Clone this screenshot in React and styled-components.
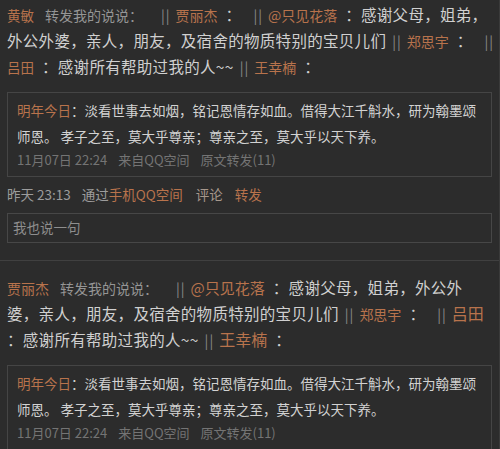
import styled, { createGlobalStyle } from "styled-components";

const GlobalStyle = createGlobalStyle`
  html, body {
    margin: 0;
    padding: 0;
    background: #2c2c2c;
  }
  body {
    font-family: "Noto Sans CJK SC", "Noto Sans", sans-serif;
    color: #cfcfcf;
  }
`;

const Page = styled.div`
  width: 499px;
  height: 449px;
  overflow: hidden;
  border-right: 1px solid #3a3a3a;
  background: #2c2c2c;
`;

const Post = styled.div`
  padding: 13px 7px 17px;
  border-bottom: 1px solid #404040;

  &:first-child {
    padding-top: 1px;
  }
`;

const Line = styled.div`
  height: 26px;
  line-height: 26px;
  white-space: nowrap;
  font-size: 15.5px;
  letter-spacing: 0.3px;
  color: #d0d0d0;
`;

const Name = styled.span`
  font-size: ${({ size }) => size || 14}px;
  letter-spacing: 0;
  color: #b8734c;
`;

const Muted = styled.span`
  font-size: 14px;
  letter-spacing: 0;
  margin: 0 12px 0 11px;
  color: #959595;
`;

const Sep = styled.span`
  color: #8a8a8a;
  font-size: 14px;
  letter-spacing: 1px;
  margin: 0 5px 0 6px;
`;

const Colon = styled.span`
  margin: 0 ${({ tight }) => (tight ? 0 : 6)}px 0 8px;
`;

const Quote = styled.div`
  margin-top: 13px;
  padding: 4px 9px 5px;
  border: 1px solid #454545;
`;

const QuoteLine = styled.div`
  height: 26px;
  line-height: 26px;
  font-size: 13.5px;
  white-space: nowrap;
  color: #d2d2d2;
`;

const QuoteMeta = styled.div`
  display: flex;
  gap: 11px;
  height: 22px;
  line-height: 22px;
  font-size: 13px;
  color: #747474;
  white-space: nowrap;
`;

const Meta = styled.div`
  margin-top: 6px;
  height: 22px;
  line-height: 22px;
  font-size: 13.5px;
  color: #9c9c9c;
  white-space: nowrap;
`;

const MetaGap = styled.span`
  margin-left: ${({ w }) => w}px;
`;

const Link = styled.span`
  color: ${({ soft }) => (soft ? "#a7988c" : "#b8734c")};
`;

const Reply = styled.div`
  margin-top: 8px;
  height: 28px;
  border: 1px solid #474747;
  padding: 0 5px;
  line-height: 26px;
  font-size: 13.5px;
  color: #8e8e8e;
`;

const QuoteBlock = () => (
  <Quote>
    <QuoteLine>
      <Name size={13.5}>明年今日</Name>：淡看世事去如烟，铭记恩情存如血。借得大江千斛水，研为翰墨颂
    </QuoteLine>
    <QuoteLine>师恩。 孝子之至，莫大乎尊亲；尊亲之至，莫大乎以天下养。</QuoteLine>
    <QuoteMeta>
      <span>11月07日 22:24</span>
      <span>来自QQ空间</span>
      <span>原文转发(11)</span>
    </QuoteMeta>
  </Quote>
);

export default function App() {
  return (
    <Page>
      <GlobalStyle />
      <Post>
        <Line>
          <Name size={13.5}>黄敏</Name><Muted>转发我的说说：</Muted>
          <Sep>||</Sep><Name>贾丽杰</Name><Colon>：</Colon>
          <Sep>||</Sep><Name>@只见花落</Name><Colon tight>：</Colon>感谢父母，姐弟，
        </Line>
        <Line>
          外公外婆，亲人，朋友，及宿舍的物质特别的宝贝儿们<Sep>||</Sep>
          <Name>郑思宇</Name><Colon>：</Colon><Sep>||</Sep>
        </Line>
        <Line>
          <Name size={13.5}>吕田</Name><Colon tight>：</Colon>感谢所有帮助过我的人~~<Sep>||</Sep>
          <Name>王幸楠</Name><Colon>：</Colon>
        </Line>
        <QuoteBlock />
        <Meta>
          昨天 23:13<MetaGap w={11} />通过<Link>手机QQ空间</Link>
          <MetaGap w={13} /><Link soft>评论</Link><MetaGap w={12} /><Link>转发</Link>
        </Meta>
        <Reply>我也说一句</Reply>
      </Post>
      <Post>
        <Line>
          <Name>贾丽杰</Name><Muted>转发我的说说：</Muted>
          <Sep>||</Sep><Name size={15}>@只见花落</Name><Colon tight>：</Colon>感谢父母，姐弟，外公外
        </Line>
        <Line>
          婆，亲人，朋友，及宿舍的物质特别的宝贝儿们<Sep>||</Sep>
          <Name>郑思宇</Name><Colon>：</Colon><Sep>||</Sep><Name size={16}>吕田</Name>
        </Line>
        <Line>
          ：感谢所有帮助过我的人~~<Sep>||</Sep><Name size={16}>王幸楠</Name><Colon>：</Colon>
        </Line>
        <QuoteBlock />
      </Post>
    </Page>
  );
}
